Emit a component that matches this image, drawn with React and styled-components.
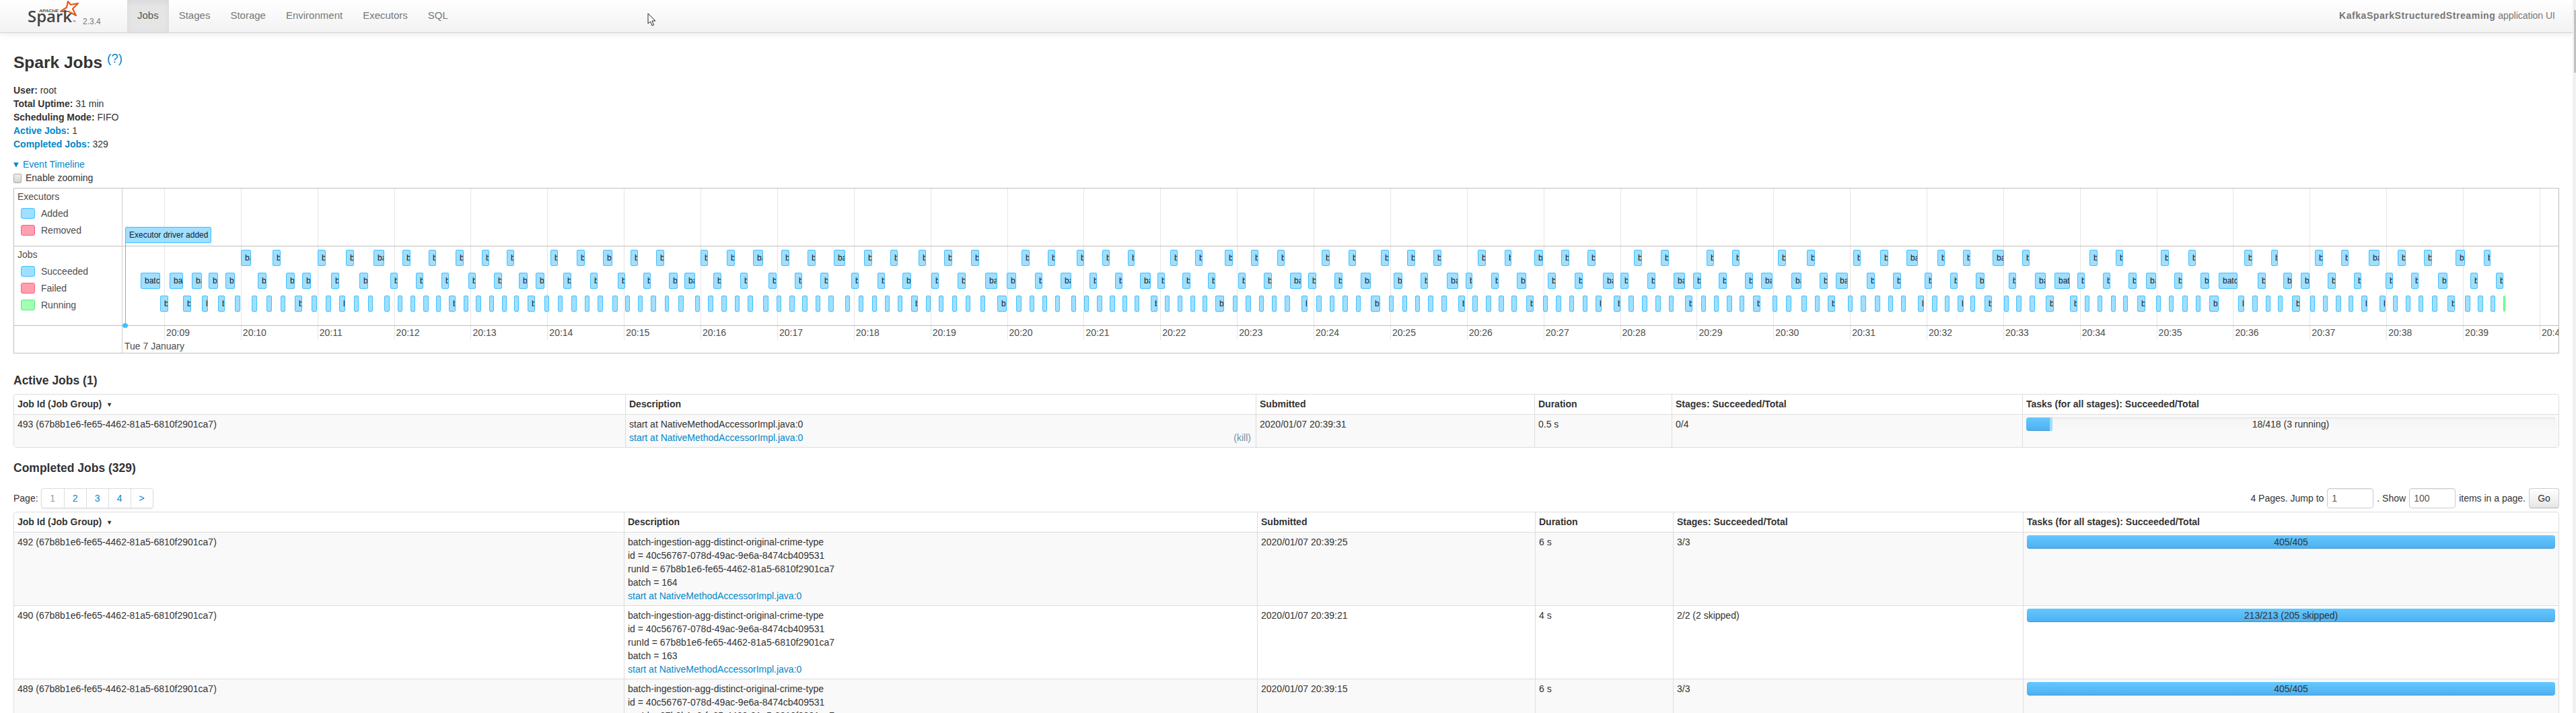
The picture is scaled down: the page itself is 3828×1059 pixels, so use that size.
import React from 'react';
import styled, { createGlobalStyle } from 'styled-components';

const Global = createGlobalStyle`
  html, body { margin: 0; padding: 0; height: 1059px; overflow: hidden; background: #fff; }
  body { font-family: "Liberation Sans", Arial, sans-serif; font-size: 14px; line-height: 20px; color: #333; }
  * { box-sizing: border-box; }
  a { color: #0088cc; text-decoration: none; }
`;

const Page = styled.div`position: relative; width: 3823px; height: 1059px; overflow: hidden;`;
const ScrollTrack = styled.div`position: fixed; top: 0; right: 0; width: 5px; height: 1059px; background: #f1f1f1;`;
const ScrollThumb = styled.div`position: absolute; top: 15px; right: 0; width: 3px; height: 93px; background: #c1c1c1;`;
const Cursor = styled.svg`position: absolute; left: 962px; top: 19px; width: 13px; height: 20px;`;

const Navbar = styled.header`
  height: 49px; display: flex; align-items: stretch; position: relative;
  background: linear-gradient(#ffffff, #f2f2f2);
  border-bottom: 1px solid #d4d4d4;
  box-shadow: 0 1px 10px rgba(0,0,0,.1);
`;
const Brand = styled.div`width: 189px; display: flex; align-items: flex-start;`;
const Version = styled.span`font-size: 12px; line-height: 14px; color: #777; margin: 25px 0 0 3px;`;
const Tab = styled.a`
  padding: 13px 15px 0; font-size: 15px; color: ${p => (p.$active ? '#555' : '#777')};
  background: ${p => (p.$active ? '#e5e5e5' : 'transparent')};
  box-shadow: ${p => (p.$active ? 'inset 0 3px 8px rgba(0,0,0,.06)' : 'none')};
`;
const AppName = styled.div`margin-left: auto; padding: 13px 26px 0 0; color: #777;`;
const AppTitle = styled.strong`letter-spacing: .55px;`;

const Content = styled.main`padding: 0 20px;`;
const Title = styled.h3`margin: 24px 0 11px; font-size: 24.5px; line-height: 40px; font-weight: 700; color: #333;`;
const Help = styled.sup`font-size: 19px; font-weight: 400; line-height: 0; vertical-align: 8px; color: #0088cc;`;
const SummaryList = styled.ul`margin: 0 0 10px; padding: 0; list-style: none;`;
const SummaryLink = styled.strong`color: #0088cc;`;
const Toggle = styled.div`display: flex; align-items: center; height: 20px; color: #0088cc;`;
const ToggleArrow = styled.span`font-size: 15px; width: 14px; line-height: 20px;`;
const ZoomRow = styled.label`display: flex; align-items: center; height: 20px; gap: 6px;`;
const Check = styled.input`
  appearance: none; width: 12px; height: 14px; margin: 1px 0 0; border: 1px solid #aaa; border-radius: 2px;
  background: linear-gradient(#eee, #d6d6d6);
`;

const Frame = styled.section`
  position: relative; margin-top: 5px; width: 3783px; border: 1px solid #bfbfbf; overflow: hidden;
  display: flex; flex-direction: column;
`;
const GridLayer = styled.div`position: absolute; left: 160px; top: 0; width: 3621px; height: 225px;`;
const MajorLine = styled.div`position: absolute; left: 0; top: 0; height: 245px; width: 1px; background: #d0d0d0;`;
const GridLine = styled.div.attrs(p => ({ style: { left: p.$x } }))`
  position: absolute; top: 0; height: 225px; width: 1px; background: #e5e5e5;
`;
const Lane = styled.div`
  position: relative; display: flex; height: ${p => p.$h}px;
  border-bottom: ${p => (p.$last ? 'none' : '1px solid #bfbfbf')};
`;
const Labels = styled.div`width: 160px; padding: 2px 0 0 5px; flex: none;`;
const LabelTitle = styled.div`height: 20px; margin-bottom: 2px; color: #4d4d4d;`;
const LegendRow = styled.div`display: flex; align-items: center; height: 25px; gap: 9px; margin-left: 5px; color: #4d4d4d;`;
const Swatch = styled.span`
  width: 21px; height: 16px; border-radius: 3px; border: 1px solid ${p => p.$line}; background: ${p => p.$fill};
`;
const Canvas = styled.div`position: relative; flex: 1; margin-left: 1px;`;
const Item = styled.div.attrs(p => ({ style: { left: p.$x, width: p.$w, top: p.$top } }))`
  position: absolute; height: 24px; overflow: hidden; white-space: nowrap;
  text-indent: 5px; font-size: 12px; line-height: 22px;
  border: 1px solid ${p => (p.$running ? '#3eff5c' : '#3ec0ff')};
  background: ${p => (p.$running ? '#a0ffb0' : '#a0dfff')};
  border-radius: 2px; color: #1a1a2a;
`;
const Marker = styled.div`position: absolute; left: 165px; top: 80px; width: 1px; height: 123px; background: #3ec0ff;`;
const Dot = styled.div`position: absolute; left: 161px; top: 200px; width: 8px; height: 7px; border-radius: 50%; background: #3ec0ff;`;
const Tick = styled.span.attrs(p => ({ style: { left: p.$x } }))`position: absolute; top: 0; color: #4d4d4d; line-height: 20px; white-space: nowrap;`;
const DateLabel = styled.span`position: absolute; left: 3px; top: 20px; color: #4d4d4d; line-height: 20px;`;

const SectionTitle = styled.h4`
  margin: ${p => p.$top}px 0 ${p => p.$bottom}px; font-size: 17.5px; line-height: 20px; font-weight: 700; color: #333;
`;
const PagerRow = styled.div`display: flex; justify-content: space-between; align-items: center; height: 30px; margin-bottom: 5px;`;
const PagerLeft = styled.div`display: flex; align-items: center; gap: 4px;`;
const PageList = styled.div`
  display: flex; height: 30px; border: 1px solid #ddd; border-radius: 4px; box-shadow: 0 1px 2px rgba(0,0,0,.1);
`;
const PageLink = styled.a`
  width: 33px; text-align: center; line-height: 28px; border-left: ${p => (p.$first ? 'none' : '1px solid #ddd')};
  color: ${p => (p.$current ? '#999' : '#0088cc')};
`;
const PagerRight = styled.div`display: flex; align-items: center; gap: 5px;`;
const SmallInput = styled.input`
  width: 69px; height: 30px; padding: 4px 6px; border: 1px solid #ccc; border-radius: 4px;
  font: 14px "Liberation Sans", Arial, sans-serif; color: #555; box-shadow: inset 0 1px 1px rgba(0,0,0,.075);
`;
const GoButton = styled.button`
  width: 45px; height: 30px; border: 1px solid #ccc; border-bottom-color: #b3b3b3; border-radius: 4px;
  background: linear-gradient(#fff, #e6e6e6); font: 14px "Liberation Sans", Arial, sans-serif; color: #333; padding: 0;
`;

const Table = styled.table`
  width: 3783px; table-layout: fixed; border-collapse: separate; border-spacing: 0;
  border: 1px solid #ddd; border-radius: 4px;
`;
const Head = styled.th`
  padding: 4px 5px; text-align: left; font-weight: 700; color: #333; vertical-align: top;
  border-left: ${p => (p.$first ? 'none' : '1px solid #ddd')};
`;
const Arrow = styled.span`font-size: 10px; margin-left: 9px; vertical-align: 1px;`;
const Cell = styled.td`
  padding: 4px 5px; vertical-align: top; border-top: 1px solid #ddd; color: #333;
  border-left: ${p => (p.$first ? 'none' : '1px solid #ddd')};
  background: ${p => (p.$odd ? '#f9f9f9' : '#fff')};
`;
const Line = styled.div`height: 20px; white-space: nowrap;`;
const DescLink = styled.a`display: block; height: 20px;`;
const Kill = styled.a`float: right; margin-right: 2px; color: #6f8fa5;`;
const Progress = styled.div`
  position: relative; display: flex; height: 20px; border-radius: 4px; overflow: hidden;
  background: linear-gradient(#f5f5f5, #f9f9f9); box-shadow: inset 0 1px 2px rgba(0,0,0,.1);
`;
const ProgressFill = styled.div.attrs(p => ({ style: { width: `${p.$pct}%` } }))`
  background: linear-gradient(#64c8ff, #4fb0f0); border-bottom: 1px solid #3f94d0;
`;
const ProgressRunning = styled.div.attrs(p => ({ style: { width: `${p.$pct}%` } }))`
  background: #a0dfff;
`;
const ProgressText = styled.span`position: absolute; left: 0; right: 0; text-align: center; line-height: 20px; color: #333;`;

const zoom = (origin, scale, pairs) => pairs.map(([a, b]) => [origin + a / scale, origin + b / scale]);
const Z1 = 1.568;
const Z2 = 1568 / 950;
const Z3 = 1568 / 928;

const row1 = [
  ...zoom(0, Z1, [[561,585],[635,654],[740,759],[806,825],[870,895],[938,956],[999,1016],[1062,1080],[1122,1140],[1181,1198],[1282,1300],[1344,1363],[1405,1427],[1469,1486],[1529,1547]]),
  ...zoom(1000, Z1, [[64,82],[125,144],[187,210],[252,271],[314,332],[375,401],[445,464],[506,524],[572,590],[632,650],[695,714],[812,831],[873,891],[941,958],[1000,1018],[1060,1076],[1159,1176],[1217,1234],[1286,1305],[1347,1364],[1408,1425],[1512,1530]]),
  ...zoom(2000, Z2, [[7,24],[86,105],[151,170],[215,234],[324,343],[389,406],[462,484],[528,548],[593,612],[706,726],[772,792],[884,903],[947,966],[1060,1079],[1131,1150],[1244,1263],[1311,1330],[1375,1403],[1450,1469],[1514,1532]]),
  ...zoom(2900, Z3, [[103,131],[177,196],[346,367],[412,431],[526,546],[595,613],[735,755],[803,820],[912,933],[979,997],[1047,1075],[1120,1141],[1186,1207],[1266,1289],[1336,1354]]),
];
const row2 = [
  ...zoom(0, Z1, [[328,373],[395,426],[447,470],[486,508],[525,547],[601,621],[666,686],[704,725],[771,790],[837,858],[909,927],[969,987],[1029,1046],[1091,1109],[1151,1170],[1209,1229],[1248,1269],[1313,1332],[1375,1392],[1439,1457],[1499,1517],[1559,1579]]),
  ...zoom(1000, Z1, [[27,52],[94,113],[157,174],[223,241],[284,301],[343,362],[416,433],[477,494],[535,555],[602,620],[663,682],[728,756],[778,800],[844,861],[903,928],[971,988],[1030,1048],[1088,1114],[1129,1146],[1187,1206],[1247,1264],[1317,1334],[1377,1396],[1438,1464],[1480,1499],[1542,1560]]),
  ...zoom(2000, Z2, [[36,61],[117,139],[183,201],[248,276],[294,310],[357,375],[420,442],[495,515],[561,581],[630,657],[673,693],[740,759],[804,832],[852,871],[914,934],[979,999],[1018,1046],[1093,1117],[1162,1182],[1202,1231],[1278,1297],[1342,1362],[1419,1438],[1482,1500],[1545,1567]]),
  ...zoom(2900, Z3, [[144,162],[210,237],[259,297],[316,335],[380,399],[444,465],[488,514],[560,580],[625,647],[671,718],[769,789],[833,855],[877,899],[945,965],[1010,1029],[1090,1108],[1154,1173],[1222,1245],[1303,1322],[1367,1386]]),
];
const row3 = [
  ...zoom(0, Z1, [[373,392],[426,446],[470,485],[508,524],[547,560],[586,599],[621,633],[654,665],[686,704],[726,739],[759,771],[790,804],[825,836],[858,869],[895,908],[927,938],[956,967],[986,999],[1016,1027],[1046,1062],[1080,1092],[1109,1121],[1140,1151],[1170,1181],[1198,1209],[1229,1247],[1269,1279],[1300,1311],[1331,1344],[1363,1374],[1393,1405],[1427,1439],[1457,1468],[1486,1498],[1516,1529],[1549,1558]]),
  ...zoom(1000, Z1, [[12,25],[52,63],[82,94],[113,125],[144,155],[174,186],[210,222],[241,252],[271,284],[301,314],[332,344],[362,375],[401,413],[433,444],[464,475],[494,505],[524,535],[555,571],[590,601],[620,631],[650,662],[682,693],[716,727],[756,778],[800,812],[831,842],[861,872],[891,902],[928,940],[958,969],[988,1000],[1018,1030],[1048,1058],[1076,1087],[1114,1129],[1146,1157],[1176,1187],[1206,1217],[1234,1245],[1264,1284],[1305,1316],[1335,1347],[1365,1377],[1396,1407],[1425,1438],[1464,1479],[1499,1512],[1530,1542]]),
  ...zoom(2000, Z2, [[-9,5],[25,36],[61,84],[106,117],[139,151],[170,182],[201,215],[234,248],[276,292],[310,324],[343,357],[375,388],[406,419],[442,461],[484,495],[515,528],[548,560],[581,593],[612,628],[657,673],[693,706],[726,740],[759,772],[792,804],[832,850],[871,883],[903,914],[934,947],[966,977],[998,1017],[1046,1058],[1079,1093],[1117,1131],[1150,1162],[1182,1200],[1231,1243],[1263,1276],[1297,1310],[1330,1342],[1362,1374],[1403,1418],[1438,1450],[1469,1481],[1500,1515],[1532,1544]]),
  ...zoom(2900, Z3, [[83,101],[132,143],[162,175],[196,209],[237,257],[297,316],[335,346],[367,379],[400,412],[431,443],[466,487],[514,525],[546,557],[580,593],[613,625],[647,671],[719,735],[755,769],[789,801],[820,831],[855,875],[900,912],[933,945],[965,978],[997,1009],[1029,1044],[1075,1090],[1108,1120],[1141,1152],[1173,1184],[1207,1220],[1245,1264],[1289,1302],[1322,1335],[1354,1365]]),
];

const ORIGIN = 182;
const LABEL = 'batch-ingestion-agg-distinct-original-crime-type';
const ticks = Array.from({ length: 32 }, (_, i) => ({ x: 244 + i * 113.87, label: `20:${String(9 + i).padStart(2, '0')}` }));

// The item shows only as much of its label as its width leaves room for.
const CHAR_WIDTHS = [6.7, 6.7, 3.3, 6, 6.7];
const visibleLabel = w => {
  let room = w - 8;
  let n = 0;
  while (room > 0 && n < CHAR_WIDTHS.length) { room -= CHAR_WIDTHS[n]; n += 1; }
  return LABEL.slice(0, n);
};

const Bars = ({ items, top }) =>
  items.map(([a, b], i) => {
    const w = Math.round(b) - Math.round(a);
    return <Item key={i} $x={Math.round(a) - ORIGIN} $w={w} $top={top}>{visibleLabel(w)}</Item>;
  });

const activeCols = [908, 937, 414, 204, 521, 797];
const doneCols = [906, 941, 413, 205, 520, 796];
const heads = ['Description', 'Submitted', 'Duration', 'Stages: Succeeded/Total', 'Tasks (for all stages): Succeeded/Total'];

const TableHead = ({ cols }) => (
  <>
    <colgroup>{cols.map((w, i) => <col key={i} width={w} />)}</colgroup>
    <thead>
      <tr>
        <Head $first>Job Id (Job Group)<Arrow>▾</Arrow></Head>
        {heads.map(h => <Head key={h}>{h}</Head>)}
      </tr>
    </thead>
  </>
);

const doneRows = [
  { id: 492, batch: 164, time: '2020/01/07 20:39:25', dur: '6 s', stages: '3/3', tasks: '405/405', odd: true },
  { id: 490, batch: 163, time: '2020/01/07 20:39:21', dur: '4 s', stages: '2/2 (2 skipped)', tasks: '213/213 (205 skipped)', odd: false },
  { id: 489, batch: 162, time: '2020/01/07 20:39:15', dur: '6 s', stages: '3/3', tasks: '405/405', odd: true },
];

const SparkLogo = () => (
  <svg width="120" height="48" viewBox="0 0 120 48">
    <path d="M101 2 L105 7 L116 5 L108 13 L113 23 L102 17 L90 17 L99 11 Z" fill="none" stroke="#e25a1c" strokeWidth="2.2" strokeLinejoin="round" />
    <text x="58" y="18" fontFamily="Liberation Sans" fontSize="5.5" fontWeight="700" fontStyle="italic" fill="#444" textLength="29" lengthAdjust="spacingAndGlyphs">APACHE</text>
    <text x="41" y="33" fontFamily="Open Sans" fontSize="23" fontWeight="600" fill="#444" textLength="66" lengthAdjust="spacingAndGlyphs">Spark</text>
    <text x="108" y="33" fontFamily="Liberation Sans" fontSize="3" fill="#444">TM</text>
  </svg>
);

export default function App() {
  return (
    <>
      <Global />
      <Page>
        <Navbar>
          <Brand>
            <SparkLogo />
            <Version>2.3.4</Version>
          </Brand>
          <Tab $active>Jobs</Tab>
          <Tab>Stages</Tab>
          <Tab>Storage</Tab>
          <Tab>Environment</Tab>
          <Tab>Executors</Tab>
          <Tab>SQL</Tab>
          <AppName><AppTitle>KafkaSparkStructuredStreaming</AppTitle> application UI</AppName>
        </Navbar>
        <Content>
          <Title>Spark Jobs <Help>(?)</Help></Title>
          <SummaryList>
            <li><strong>User:</strong> root</li>
            <li><strong>Total Uptime:</strong> 31 min</li>
            <li><strong>Scheduling Mode:</strong> FIFO</li>
            <li><SummaryLink>Active Jobs:</SummaryLink> 1</li>
            <li><SummaryLink>Completed Jobs:</SummaryLink> 329</li>
          </SummaryList>
          <Toggle><ToggleArrow>▾</ToggleArrow>Event Timeline</Toggle>
          <ZoomRow><Check type="checkbox" />Enable zooming</ZoomRow>

          <Frame>
            <GridLayer>
              <MajorLine />
              {ticks.map(t => <GridLine key={t.label} $x={t.x - 181} />)}
            </GridLayer>
            <Lane $h={86}>
              <Labels>
                <LabelTitle>Executors</LabelTitle>
                <LegendRow><Swatch $fill="#a0dfff" $line="#3ec0ff" />Added</LegendRow>
                <LegendRow><Swatch $fill="#ff9fb0" $line="#ff5c80" />Removed</LegendRow>
              </Labels>
              <Canvas>
                <Item $x={4} $w={128} $top={57}>Executor driver added</Item>
              </Canvas>
            </Lane>
            <Lane $h={118}>
              <Labels>
                <LabelTitle>Jobs</LabelTitle>
                <LegendRow><Swatch $fill="#a0dfff" $line="#3ec0ff" />Succeeded</LegendRow>
                <LegendRow><Swatch $fill="#ff9fb0" $line="#ff5c80" />Failed</LegendRow>
                <LegendRow><Swatch $fill="#a0ffb0" $line="#5ce680" />Running</LegendRow>
              </Labels>
              <Canvas>
                <Bars items={row1} top={5} />
                <Bars items={row2} top={39} />
                <Bars items={row3} top={73} />
                <Item $running $x={3720 - ORIGIN} $w={3} $top={73} />
              </Canvas>
            </Lane>
            <Lane $h={40} $last>
              <Labels />
              <Canvas>
                {ticks.map(t => <Tick key={t.label} $x={t.x + 3 - ORIGIN}>{t.label}</Tick>)}
                <DateLabel>Tue 7 January</DateLabel>
              </Canvas>
            </Lane>
            <Marker />
            <Dot />
          </Frame>

          <SectionTitle $top={30} $bottom={10}>Active Jobs (1)</SectionTitle>
          <Table>
            <TableHead cols={activeCols} />
            <tbody>
              <tr>
                <Cell $first $odd>493 (67b8b1e6-fe65-4462-81a5-6810f2901ca7)</Cell>
                <Cell $odd>
                  <Line>start at NativeMethodAccessorImpl.java:0</Line>
                  <Kill>(kill)</Kill>
                  <DescLink>start at NativeMethodAccessorImpl.java:0</DescLink>
                </Cell>
                <Cell $odd>2020/01/07 20:39:31</Cell>
                <Cell $odd>0.5 s</Cell>
                <Cell $odd>0/4</Cell>
                <Cell $odd>
                  <Progress>
                    <ProgressFill $pct={4.4} />
                    <ProgressRunning $pct={0.5} />
                    <ProgressText>18/418 (3 running)</ProgressText>
                  </Progress>
                </Cell>
              </tr>
            </tbody>
          </Table>

          <SectionTitle $top={20} $bottom={20}>Completed Jobs (329)</SectionTitle>
          <PagerRow>
            <PagerLeft>
              Page:
              <PageList>
                <PageLink $first $current>1</PageLink>
                <PageLink>2</PageLink>
                <PageLink>3</PageLink>
                <PageLink>4</PageLink>
                <PageLink>&gt;</PageLink>
              </PageList>
            </PagerLeft>
            <PagerRight>
              4 Pages. Jump to
              <SmallInput defaultValue="1" />
              . Show
              <SmallInput defaultValue="100" />
              items in a page.
              <GoButton>Go</GoButton>
            </PagerRight>
          </PagerRow>
          <Table>
            <TableHead cols={doneCols} />
            <tbody>
              {doneRows.map(r => (
                <tr key={r.id}>
                  <Cell $first $odd={r.odd}>{r.id} (67b8b1e6-fe65-4462-81a5-6810f2901ca7)</Cell>
                  <Cell $odd={r.odd}>
                    <Line>{LABEL}</Line>
                    <Line>id = 40c56767-078d-49ac-9e6a-8474cb409531</Line>
                    <Line>runId = 67b8b1e6-fe65-4462-81a5-6810f2901ca7</Line>
                    <Line>batch = {r.batch}</Line>
                    <DescLink>start at NativeMethodAccessorImpl.java:0</DescLink>
                  </Cell>
                  <Cell $odd={r.odd}>{r.time}</Cell>
                  <Cell $odd={r.odd}>{r.dur}</Cell>
                  <Cell $odd={r.odd}>{r.stages}</Cell>
                  <Cell $odd={r.odd}>
                    <Progress>
                      <ProgressFill $pct={100} />
                      <ProgressText>{r.tasks}</ProgressText>
                    </Progress>
                  </Cell>
                </tr>
              ))}
            </tbody>
          </Table>
        </Content>
        <Cursor viewBox="0 0 13 20">
          <path d="M1 1 L1 16 L4.5 13 L7 19 L9.5 18 L7 12 L12 12 Z" fill="#fff" stroke="#222" strokeWidth="1" strokeLinejoin="round" />
        </Cursor>
      </Page>
      <ScrollTrack><ScrollThumb /></ScrollTrack>
    </>
  );
}
